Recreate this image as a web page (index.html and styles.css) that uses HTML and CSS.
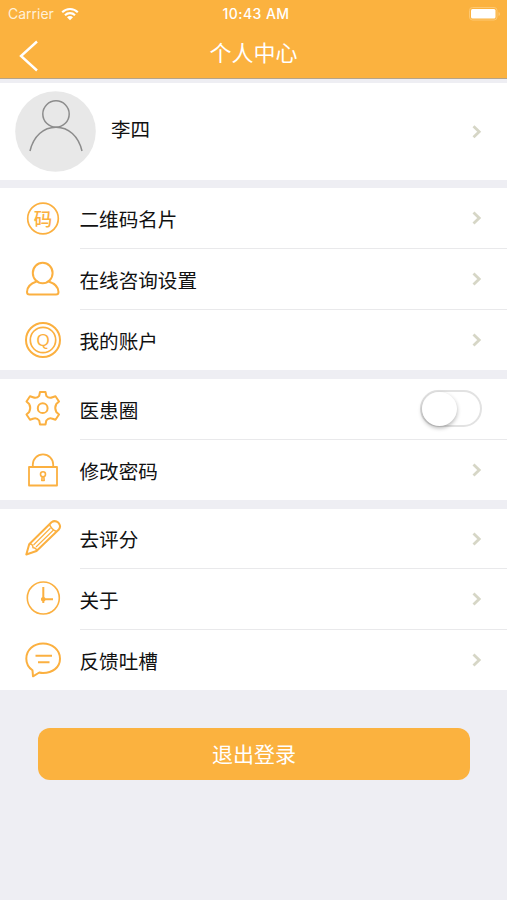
FILE: index.html
```html
<!DOCTYPE html>
<html lang="zh-CN">
<head>
    <meta charset="UTF-8">
    <meta name="viewport" content="width=device-width, initial-scale=1.0">
    <title>个人中心</title>
    <link rel="stylesheet" href="styles.css">
</head>
<body>

    <!-- 顶部 -->
    <header class="header">
        <div class="status-bar">
            <div class="carrier">
                <span>Carrier</span>
                <svg class="wifi" width="18" height="14" viewBox="0 0 18 14">
                    <path d="M1.2 5.2a11 11 0 0 1 15.6 0M4 8.2a7 7 0 0 1 10 0" fill="none" stroke="#fff" stroke-width="2.1"/>
                    <path d="M9 13.2L6 10.2a4.2 4.2 0 0 1 6 0z" fill="#fff"/>
                </svg>
            </div>
            <span class="time">10:43 AM</span>
            <svg class="battery" width="32" height="14" viewBox="0 0 32 14">
                <rect x="0.5" y="0.5" width="27.5" height="12.5" rx="3" fill="none" stroke="#fdc872"/>
                <rect x="2" y="2" width="24.5" height="9.5" rx="1.5" fill="#fff"/>
                <path d="M29.5 5v4q1.6-.6 1.6-2t-1.6-2z" fill="#fdc872"/>
            </svg>
        </div>
        <div class="nav-bar">
            <svg class="back" width="20" height="32" viewBox="0 0 20 32">
                <path d="M18 1.5L2 16l16 14.5" fill="none" stroke="#fff" stroke-width="2.4"/>
            </svg>
            <h1>个人中心</h1>
        </div>
    </header>

    <!-- 用户信息 -->
    <section class="group profile">
        <svg class="avatar" width="81" height="81" viewBox="0 0 81 81">
            <circle cx="40.5" cy="40.5" r="40.3" fill="#e8e8e8"/>
            <g fill="none" stroke="#8c8c8c" stroke-width="1.5">
                <circle cx="41" cy="23" r="13.2"/>
                <path d="M15 60C18.5 45 28.5 36.2 41 36.2S63.5 45 67 60"/>
            </g>
        </svg>
        <span class="name">李四</span>
        <svg class="arrow" width="10" height="14" viewBox="0 0 10 14"><path d="M1.5 1.2L7.2 6.7L1.5 12.2"/></svg>
    </section>

    <section class="group">
        <div class="row">
            <svg class="icon" width="38" height="38" viewBox="0 0 38 38">
                <circle cx="19" cy="18.5" r="15.3" stroke-width="1.7"/>
                <text class="bold" x="19" y="25.5" font-size="18.5">码</text>
            </svg>
            <div class="cell">
                <span>二维码名片</span>
                <svg class="arrow" width="10" height="14" viewBox="0 0 10 14"><path d="M1.5 1.5L7.2 7L1.5 12.5"/></svg>
            </div>
        </div>
        <div class="row">
            <svg class="icon" width="38" height="38" viewBox="0 0 38 38">
                <path d="M12.5 20.5C6.5 22.5 3 26.5 3 31Q3 33.5 5.500 33.5H32Q34.5 33.5 34.5 31C34.5 26.5 30.5 22.5 24.7 20.5"/>
                <ellipse cx="18.7" cy="12" rx="9.9" ry="10.2"/>
            </svg>
            <div class="cell">
                <span>在线咨询设置</span>
                <svg class="arrow" width="10" height="14" viewBox="0 0 10 14"><path d="M1.5 1.5L7.2 7L1.5 12.5"/></svg>
            </div>
        </div>
        <div class="row">
            <svg class="icon" width="38" height="38" viewBox="0 0 38 38">
                <circle cx="19" cy="19" r="17"/>
                <circle cx="19" cy="19" r="12.7" stroke-width="1.7"/>
                <text class="letter" x="19" y="24.5" font-size="17">Q</text>
            </svg>
            <div class="cell">
                <span>我的账户</span>
                <svg class="arrow" width="10" height="14" viewBox="0 0 10 14"><path d="M1.5 1.5L7.2 7L1.5 12.5"/></svg>
            </div>
        </div>
    </section>

    <section class="group">
        <div class="row">
            <svg class="icon raised" width="38" height="38" viewBox="0 0 38 38">
                <path d="M16 3H21.5L22.3 6.800Q24.800 9.800 28.500 8.300L31.500 7.200L35 12.500L32.300 15Q30.200 19 32.300 23L35 25.500L31.500 30.800L28.500 29.700Q24.800 28.300 22.300 31.500L21.500 35.500H16L15.200 31.500Q12.700 28.300 9 29.700L6 30.800L2.500 25.500L5.200 23Q7.300 19 5.200 15L2.500 12.500L6 7.200L9 8.300Q12.700 9.800 15.200 6.800Z"/>
                <circle cx="18.7" cy="19.2" r="4.9"/>
            </svg>
            <div class="cell">
                <span>医患圈</span>
                <div class="switch"></div>
            </div>
        </div>
        <div class="row">
            <svg class="icon" width="38" height="38" viewBox="0 0 38 38">
                <rect x="5" y="16" width="28" height="18.5" stroke-width="1.8"/>
                <path d="M8.8 16V13.5a10.2 10.2 0 0 1 20.4 0V16" stroke-width="1.8"/>
                <circle cx="19" cy="23.2" r="2.5" stroke-width="1.6"/>
                <path d="M18.2 25.5L17.8 29.5H20.2L19.8 25.5" stroke-width="1.6"/>
            </svg>
            <div class="cell">
                <span>修改密码</span>
                <svg class="arrow" width="10" height="14" viewBox="0 0 10 14"><path d="M1.5 1.5L7.2 7L1.5 12.5"/></svg>
            </div>
        </div>
    </section>

    <section class="group last">
        <div class="row">
            <svg class="icon raised" width="38" height="38" viewBox="0 0 38 38">
                <path d="M2.3 35.5L5.2 25.2L27.5 3.2Q31 .8 34.5 3.8Q37.5 7.2 34.8 10.5L12.5 32Z"/>
                <path d="M5.2 25.2Q9 24.5 9 28.7Q12.5 28.5 12.5 32M25.5 5.5Q27.5 10.5 32.5 12.5" stroke-width="1.5"/>
                <path d="M9.5 26L26.5 9M12 28L29.5 11" stroke-width="1.1"/>
            </svg>
            <div class="cell">
                <span>去评分</span>
                <svg class="arrow" width="10" height="14" viewBox="0 0 10 14"><path d="M1.5 1.5L7.2 7L1.5 12.5"/></svg>
            </div>
        </div>
        <div class="row">
            <svg class="icon raised" width="38" height="38" viewBox="0 0 38 38">
                <circle cx="19.3" cy="18" r="16" stroke-width="1.6"/>
                <path d="M19.3 7V23M17 19.3H29"/>
                <circle cx="19.3" cy="19.3" r="1.3"/>
            </svg>
            <div class="cell">
                <span>关于</span>
                <svg class="arrow" width="10" height="14" viewBox="0 0 10 14"><path d="M1.5 1.5L7.2 7L1.5 12.5"/></svg>
            </div>
        </div>
        <div class="row">
            <svg class="icon" width="38" height="38" viewBox="0 0 38 38">
                <path d="M8.5 29.3C4.5 26.5 2.3 22.5 2.3 17.7C2.3 9 9.7 2.5 19 2.5S36 9 36 17.7S28.5 32 19 32Q17 32 15.3 31.5L9 35.3Z"/>
                <path d="M11.5 14.7H28M14 21.200H25.5"/>
            </svg>
            <div class="cell">
                <span>反馈吐槽</span>
                <svg class="arrow" width="10" height="14" viewBox="0 0 10 14"><path d="M1.5 1.5L7.2 7L1.5 12.5"/></svg>
            </div>
        </div>
    </section>

    <button class="logout" type="button">退出登录</button>

</body>
</html>
```
FILE: styles.css
```css
* {
    box-sizing: border-box;
}
body {
    margin: 0;
    min-height: 900px;
    background-color: #eeeef3;
    font-family: "Noto Sans CJK SC", sans-serif;
    color: #111;
}
.header {
    height: 79px;
    margin-bottom: 4px;
    background-color: #fbb23f;
    border-bottom: 1px solid #b5a48a;
    color: #fff;
}
.status-bar {
    display: grid;
    grid-template-columns: 1fr auto 1fr;
    align-items: center;
    height: 27px;
    padding: 0 6px 0 8px;
    font-family: Inter, sans-serif;
    font-size: 14px;
}
.carrier {
    display: flex;
    align-items: center;
    gap: 7px;
    color: #fff0d8;
}
.time {
    margin-left: 3px;
    font-weight: 500;
    letter-spacing: 0.45px;
}
.battery {
    justify-self: end;
}
.nav-bar {
    display: grid;
    grid-template-columns: 20px 1fr 20px;
    align-items: center;
    height: 51px;
    padding: 0 19px;
}
.back {
    margin-top: 7px;
}
h1 {
    margin: -4px 0 0;
    font-size: 22px;
    line-height: 46px;
    font-weight: 400;
    text-align: center;
}
.group {
    margin-bottom: 9px;
    background-color: #fff;
}
.profile {
    display: flex;
    align-items: center;
    height: 97px;
    margin-bottom: 8px;
    padding: 0 25px 0 15px;
    font-size: 19.5px;
}
.name {
    flex: 1;
    margin: -6px 0 0 15px;
}
.row {
    display: flex;
    align-items: center;
    height: 61px;
    padding-left: 24px;
}
.row:last-child,
.last .row:first-child {
    height: 60px;
}
.icon {
    flex: none;
    margin-right: 17.5px;
    fill: none;
    stroke: #fbb040;
    stroke-width: 2;
    stroke-linejoin: round;
}
.raised {
    margin-bottom: 4px;
}
.last .raised {
    margin-bottom: 2px;
}
.icon text {
    fill: #fbb040;
    stroke: none;
    text-anchor: middle;
}
.icon .bold {
    font-weight: 500;
}
.icon .letter {
    font-family: "Liberation Sans", sans-serif;
}
.cell {
    flex: 1;
    display: flex;
    align-items: center;
    justify-content: space-between;
    height: 100%;
    padding-right: 25px;
    border-bottom: 1px solid #e9e9eb;
    font-size: 19.6px;
}
.row:last-child .cell {
    border-bottom: none;
}
.arrow {
    flex: none;
    fill: none;
    stroke: #d6d6c6;
    stroke-width: 2.8;
}
.switch {
    width: 62px;
    height: 37px;
    margin-bottom: 2px;
    border: 2px solid #e2e2e2;
    border-radius: 19px;
}
.switch::before {
    content: "";
    display: block;
    width: 35px;
    height: 34px;
    border-radius: 50%;
    background-color: #fff;
    box-shadow: 0 2px 4px rgba(0, 0, 0, 0.3);
}
.logout {
    display: block;
    width: 432px;
    height: 52px;
    margin: 38px 0 0 38px;
    padding: 0 0 3px;
    border: none;
    border-radius: 12px;
    background-color: #fbb23f;
    color: #fff;
    font-family: inherit;
    font-size: 21px;
}
```
